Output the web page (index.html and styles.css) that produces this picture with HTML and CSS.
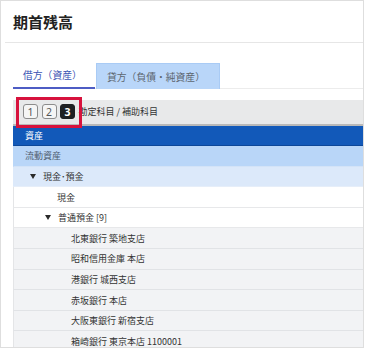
FILE: index.html
```html
<!DOCTYPE html>
<html lang="ja">
  <head>
    <meta charset="UTF-8" />
    <meta name="viewport" content="width=device-width, initial-scale=1.0" />
    <title>期首残高</title>
    <link rel="stylesheet" href="styles.css">
  </head>
  <body>
    <div class="panel">
      <div class="panel-head">
        <h1 class="panel-title">期首残高</h1>
      </div>

      <div class="panel-body">
        <ul class="tabs">
          <li class="tabs__item tabs__item--active">借方（資産）</li>
          <li class="tabs__item">貸方（負債・純資産）</li>
        </ul>

        <div class="ledger">
          <div class="ledger-head">
            <span class="level-badge">1</span>
            <span class="level-badge">2</span>
            <span class="level-badge level-badge--on">3</span>
            <span class="ledger-head__label">勘定科目 / 補助科目</span>
          </div>
          <ul class="ledger-rows">
            <li class="row row--group">資産</li>
            <li class="row row--section">流動資産</li>
            <li class="row row--folder row--lv1"><span class="caret"></span>現金･預金</li>
            <li class="row row--plain row--lv2">現金</li>
            <li class="row row--plain row--lv2-caret"><span class="caret"></span>普通預金 [9]</li>
            <li class="row row--leaf">北東銀行 築地支店</li>
            <li class="row row--leaf">昭和信用金庫 本店</li>
            <li class="row row--leaf">港銀行 城西支店</li>
            <li class="row row--leaf">赤坂銀行 本店</li>
            <li class="row row--leaf">大阪東銀行 新宿支店</li>
            <li class="row row--leaf">箱崎銀行 東京本店 1100001</li>
          </ul>
        </div>
      </div>

      <div class="callout"></div>
    </div>
  </body>
</html>
```

FILE: styles.css
```css
* {
  box-sizing: border-box;
}

body {
  margin: 0;
  background: #fff;
  font-family: "Noto Sans CJK JP", "Noto Sans", sans-serif;
  color: #333;
}

ul {
  margin: 0;
  padding: 0;
  list-style: none;
}

.panel {
  position: relative;
  width: 364px;
  height: 348px;
  border: 1px solid #dedede;
  overflow: hidden;
}

.panel-head {
  height: 42px;
  margin-left: 4px;
  padding: 11px 0 0 8px;
  border-bottom: 1px solid #e6e6e6;
}

.panel-title {
  margin: 0;
  font-size: 15px;
  line-height: 20px;
  font-weight: 700;
  color: #222;
}

.panel-body {
  padding: 20px 0 0 12px;
}

/* tabs */

.tabs {
  display: flex;
  height: 26px;
  border-bottom: 1px solid #ececec;
}

.tabs__item {
  display: flex;
  align-items: center;
  height: 26px;
  padding: 0 10px;
  margin-right: 1px;
  font-size: 9.8px;
  color: #5d6670;
  background: #b9d6f9;
  border: 1px solid #a9cbf5;
  border-bottom: 0;
}

.tabs__item--active {
  width: 82px;
  background: transparent;
  border: 0;
  border-bottom: 2px solid #4d5cc4;
  color: #3b54b4;
}

.tabs__item:not(.tabs__item--active) {
  width: 124px;
}

/* ledger table */

.ledger {
  margin-top: 11px;
}

.ledger-head {
  display: flex;
  align-items: center;
  height: 25.5px;
  padding-left: 10px;
  gap: 3.5px;
  background: #e8e9ea;
  border-bottom: 2px solid #b9b9b9;
}

.level-badge {
  display: flex;
  justify-content: center;
  align-items: center;
  width: 15px;
  height: 15px;
  border: 1px solid #8c8c8c;
  border-radius: 3px;
  background: #f5f5f5;
  font-family: "Noto Sans", sans-serif;
  font-size: 10.5px;
  color: #555;
}

.level-badge--on {
  background: #1e2023;
  border-color: #1e2023;
  color: #fff;
  font-weight: 700;
}

.ledger-head__label {
  font-size: 9px;
  color: #333;
}

.row {
  display: flex;
  align-items: center;
  height: 20.6px;
  padding-left: 11px;
  font-size: 9px;
  background: #f2f3f5;
  border-bottom: 1px solid #e1e3e6;
  border-left: 1px solid #e4e5e7;
}

.row--group {
  background: #1259b9;
  border-bottom-color: #0c4799;
  border-left-color: #1259b9;
  color: #fff;
}

.row--section {
  background: #b9d6f8;
  border-bottom-color: #d3e3f7;
  border-left-color: #b9d6f8;
  color: #4f5d70;
}

.row--folder {
  background: #dce9fa;
  border-bottom-color: #e6eef9;
  border-left-color: #dce9fa;
}

.row--plain {
  background: #fff;
  border-bottom-color: #e7e8ea;
}

.row--lv1 {
  padding-left: 16px;
}

.row--lv2 {
  padding-left: 43px;
}

.row--lv2-caret {
  padding-left: 31px;
}

.row--leaf {
  padding-left: 57px;
}

.caret {
  width: 0;
  height: 0;
  margin-right: 7px;
  border-left: 3px solid transparent;
  border-right: 3px solid transparent;
  border-top: 5px solid #2a2a2a;
}

/* red annotation frame over the level switch */

.callout {
  position: absolute;
  left: 15px;
  top: 96px;
  width: 66px;
  height: 31px;
  border: 3px solid #d7123d;
}
```
